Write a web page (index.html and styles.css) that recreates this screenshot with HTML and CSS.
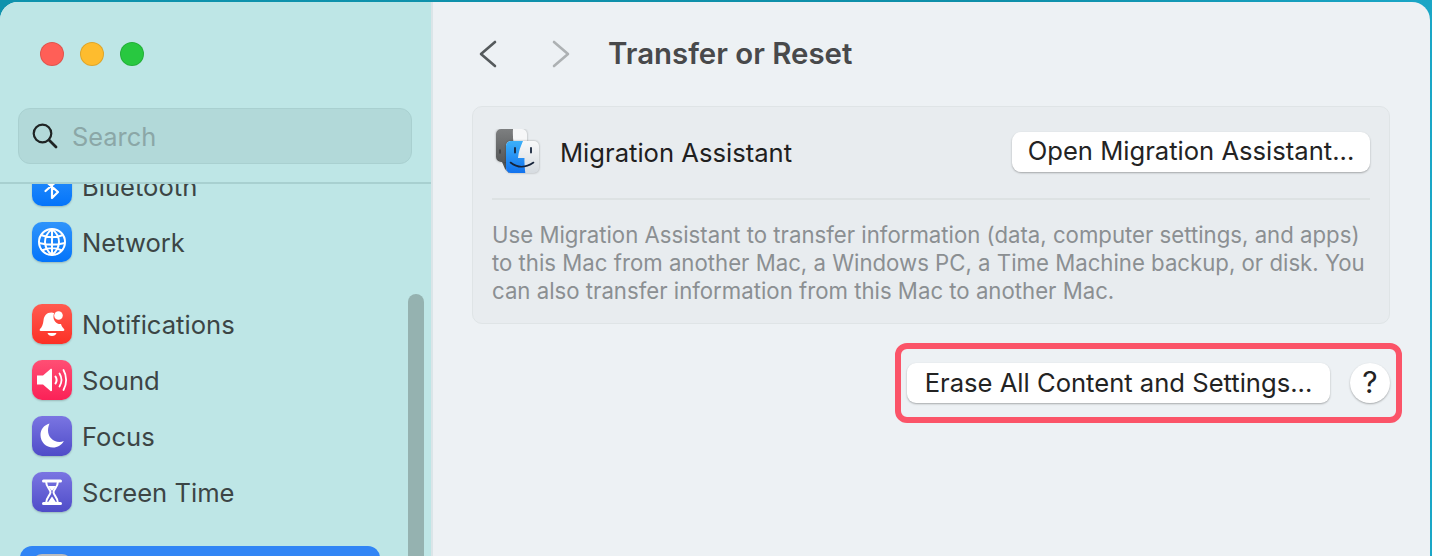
FILE: index.html
```html
<!DOCTYPE html>
<html>
<head>
  <title>Transfer or Reset</title>
  <link rel="stylesheet" href="styles.css">
</head>
<body>
  <div class="window">
    <div class="sidebar">
      <div class="sidebar-head">
        <div class="lights">
          <span class="light red"></span>
          <span class="light yellow"></span>
          <span class="light green"></span>
        </div>
        <div class="search">
          <svg class="search-icon" width="26" height="26" viewBox="0 0 26 26" fill="none" stroke="#1f2424" stroke-width="2.2" stroke-linecap="round"><circle cx="10.5" cy="10.5" r="8.8"/><path d="M17 17l7 7" stroke-width="2.8"/></svg>
          <span class="search-text">Search</span>
        </div>
      </div>
      <div class="list">
        <div class="list-inner">
          <div class="group">
            <div class="row">
              <span class="icon blue"><svg width="40" height="40" viewBox="0 0 40 40" fill="none" stroke="#fff" stroke-width="2.2" stroke-linejoin="round" stroke-linecap="round"><path d="M13.500 15l12.500 11-6 6V8l6 6-12.500 11"/></svg></span>
              <span class="label">Bluetooth</span>
            </div>
            <div class="row">
              <span class="icon blue"><svg width="40" height="40" viewBox="0 0 40 40" fill="none" stroke="#fff" stroke-width="2"><circle cx="20" cy="20" r="13"/><path d="M20 7c-5 4-7 8-7 13s2 9 7 13M20 7c5 4 7 8 7 13s-2 9-7 13M20 7v26M9 13c7 3 15 3 22 0M7 21c8 2 18 2 26 0M10 28.500c6-3 14-3 20 0"/></svg></span>
              <span class="label">Network</span>
            </div>
          </div>
          <div class="group">
            <div class="row">
              <span class="icon red-icon"><svg width="40" height="40" viewBox="0 0 40 40" fill="#fff"><path d="M19.500 8.500c-5 0-7.500 3.500-8 8-.5 4-1.500 6.500-3.500 8.500-.8.800-.4 2 .8 2h22.400c1.200 0 1.600-1.200.8-2-1.500-1.500-2.400-3-3-5-4 .5-8-3-7.500-8 0-1 .3-2 .7-2.800-.8-.5-1.700-.7-2.700-.7z"/><circle cx="26.500" cy="11.500" r="4.300"/><path d="M15.500 29h9c-.5 2-2.300 3-4.500 3s-4-1-4.500-3z"/></svg></span>
              <span class="label">Notifications</span>
            </div>
            <div class="row">
              <span class="icon pink"><svg width="40" height="40" viewBox="0 0 40 40" fill="none" stroke="#fff" stroke-linecap="round"><path d="M5 15.500h6l7.500-6.500c.6-.5 1.500-.1 1.500.7v20.600c0 .8-.9 1.200-1.500.7L11 24.500H5z" fill="#fff" stroke="none"/><path d="M23.500 16.500c1.400 2.200 1.400 4.800 0 7" stroke-width="2"/><path d="M27.500 13.500c2.500 4 2.500 9 0 13" stroke-width="1.800"/><path d="M31.500 10c3.500 6 3.500 14 0 20" stroke-width="1.800"/></svg></span>
              <span class="label">Sound</span>
            </div>
            <div class="row">
              <span class="icon purple"><svg width="40" height="40" viewBox="0 0 40 40" fill="#fff"><path d="M17.500 7.500C12 9 8.500 13.500 8.500 19c0 7 5.500 12.500 12.500 12.500 4.700 0 8.800-2.600 10.800-6.500-1.300.6-2.800.9-4.300.9-6.500 0-11.500-5-11.500-11.400 0-2.500.6-4.800 1.500-7z"/></svg></span>
              <span class="label">Focus</span>
            </div>
            <div class="row">
              <span class="icon purple"><svg width="40" height="40" viewBox="0 0 40 40" fill="none" stroke="#fff" stroke-width="2" stroke-linecap="round"><path d="M11.500 9h17M11.500 31.500h17" stroke-width="3"/><path d="M14 9c0 6.500 4.500 8 4.500 11.200S14 25 14 31.500M26 9c0 6.500-4.500 8-4.500 11.200S26 25 26 31.500"/><path d="M16 14h8l-4 5zM15.500 31l4.500-6.500 4.500 6.500z" fill="#fff" stroke="none"/></svg></span>
              <span class="label">Screen Time</span>
            </div>
          </div>
          <div class="group">
            <div class="row selected">
              <span class="icon grey"></span>
              <span class="label">General</span>
            </div>
          </div>
        </div>
        <div class="scrollbar"></div>
      </div>
    </div>

    <div class="main">
      <div class="toolbar">
        <svg class="nav-back" width="18" height="28" viewBox="0 0 18 28" fill="none" stroke="#555a5c" stroke-width="2.600" stroke-linecap="round" stroke-linejoin="round"><path d="M16 2L2 14l14 12"/></svg>
        <svg class="nav-forward" width="18" height="28" viewBox="0 0 18 28" fill="none" stroke="#adb1b3" stroke-width="2.600" stroke-linecap="round" stroke-linejoin="round"><path d="M2 2l14 12L2 26"/></svg>
        <h1 class="title">Transfer or Reset</h1>
      </div>

      <div class="card">
        <div class="card-top">
          <svg class="finder" width="48" height="48" viewBox="0 0 48 48">
            <defs>
              <linearGradient id="finderBlue" x1="0" y1="0" x2="0" y2="1"><stop offset="0" stop-color="#3cb0f9"/><stop offset="1" stop-color="#1272ee"/></linearGradient>
              <linearGradient id="finderWhite" x1="0" y1="0" x2="0" y2="1"><stop offset="0" stop-color="#f8f9fa"/><stop offset="1" stop-color="#d6dbe0"/></linearGradient>
              <linearGradient id="finderGrey" x1="0" y1="0" x2="0" y2="1"><stop offset="0" stop-color="#7d7f80"/><stop offset="1" stop-color="#565859"/></linearGradient>
            </defs>
            <path d="M8 33h6l2 3h4v4l-5 4-4-4z" fill="#54585b"/>
            <rect x="2" y="0" width="31" height="33" rx="5" fill="#f6f7f8" class="finder-back"/>
            <path d="M7 0h12c-.5 8 .5 15 2 22l2 11H7a5 5 0 0 1-5-5V5a5 5 0 0 1 5-5z" fill="url(#finderGrey)"/>
            <rect x="12" y="12" width="33" height="32" rx="5" fill="url(#finderWhite)" class="finder-front"/>
            <path d="M17 12h12c-2.500 5.500-4.500 11-5 17h6.500c-.2 5 .1 10 .8 15H17a5 5 0 0 1-5-5V17a5 5 0 0 1 5-5z" fill="url(#finderBlue)"/>
            <path d="M21 19v4.500M37 19v4.500" stroke="#16233a" stroke-width="1.800" stroke-linecap="round"/>
            <path d="M16.500 33.500c7 5.500 15 5.500 23 0" fill="none" stroke="#16233a" stroke-width="1.600" stroke-linecap="round"/>
            <path d="M6 21v3" stroke="#3b3d3f" stroke-width="1.500" stroke-linecap="round"/>
          </svg>
          <span class="card-name">Migration Assistant</span>
          <button class="btn open-btn" type="button">Open Migration Assistant...</button>
        </div>
        <p class="card-desc">Use Migration Assistant to transfer information (data, computer settings, and apps) to this Mac from another Mac, a Windows PC, a Time Machine backup, or disk. You can also transfer information from this Mac to another Mac.</p>
      </div>

      <div class="actions">
        <div class="highlight">
          <button class="btn erase-btn" type="button">Erase All Content and Settings...</button>
          <button class="btn help-btn" type="button">?</button>
        </div>
      </div>
    </div>
  </div>
</body>
</html>
```

FILE: styles.css
```css
html, body {
  height: 100%;
}
body {
  margin: 0;
  height: 556px;
  overflow: hidden;
  padding: 2px 2px 0 0;
  box-sizing: border-box;
  background: linear-gradient(90deg, #0f93ad 0%, #0e8fa9 70%, #1aa6c6 100%);
  font-family: Inter, "Liberation Sans", sans-serif;
}
.window {
  display: flex;
  height: 554px;
  border-radius: 18px 18px 0 0;
  overflow: hidden;
  background-color: #edf1f4;
}

/* sidebar */
.sidebar {
  width: 431px;
  flex-shrink: 0;
  display: flex;
  flex-direction: column;
  background-color: #bee6e6;
  border-right: 2px solid #dbe5e8;
}
.sidebar-head {
  height: 182px;
  flex-shrink: 0;
  box-sizing: border-box;
  padding: 40px 19px 0 18px;
  border-bottom: 2px solid #a8d0d0;
  position: relative;
  z-index: 1;
}
.lights {
  display: flex;
  gap: 16px;
  padding-left: 22px;
}
.light {
  width: 24px;
  height: 24px;
  box-sizing: border-box;
  border-radius: 50%;
  border: 1px solid rgba(0,0,0,0.12);
}
.light.red { background-color: #ff5f57; }
.light.yellow { background-color: #febc2e; }
.light.green { background-color: #28c840; }
.search {
  margin-top: 42px;
  height: 56px;
  box-sizing: border-box;
  display: flex;
  align-items: center;
  gap: 14px;
  padding: 0 13px;
  background-color: #b2d9d9;
  border: 1px solid #a9d0d0;
  border-radius: 12px;
}
.search-text {
  font-size: 25.4px;
  color: #8ba7a7;
}
.list {
  flex: 1;
  min-height: 0;
  position: relative;
  overflow: hidden;
}
.list-inner {
  margin-top: -26px;
  padding: 0 20px;
  display: flex;
  flex-direction: column;
  gap: 26px;
}
.row {
  width: 360px;
  height: 56px;
  box-sizing: border-box;
  display: flex;
  align-items: center;
  gap: 10px;
  padding-left: 12px;
  border-radius: 12px;
}
.row.selected {
  background-color: #3185f5;
}
.selected .label {
  color: #fff;
}
.label {
  font-size: 25.6px;
  color: #3c4545;
}
.icon {
  width: 40px;
  height: 40px;
  flex-shrink: 0;
  border-radius: 10px;
  box-shadow: 0 1px 2px rgba(0,0,0,0.2);
}
.icon svg {
  display: block;
}
.blue { background: linear-gradient(#2f94fb, #0474fa); }
.red-icon { background: linear-gradient(#ff5b50, #fc3025); }
.pink { background: linear-gradient(#ff4f74, #fb2157); }
.purple { background: linear-gradient(#7a75e2, #4f4cc8); }
.grey { background-color: #b9bcc0; }
.scrollbar {
  position: absolute;
  left: 408px;
  top: 110px;
  width: 16px;
  height: 320px;
  border-radius: 8px;
  background-color: #95b2b0;
}

/* main pane */
.main {
  flex: 1;
  padding: 0 40px 0 39px;
}
.toolbar {
  height: 104px;
  display: flex;
  align-items: center;
}
.nav-back {
  margin-left: 7px;
  margin-bottom: 1px;
}
.nav-forward {
  margin-left: 55px;
  margin-bottom: 1px;
}
.title {
  margin: 0 0 2px 38px;
  font-size: 29.4px;
  font-weight: 600;
  color: #48494b;
}
.card {
  height: 218px;
  box-sizing: border-box;
  padding: 0 19px;
  background-color: #e8ecef;
  border: 1px solid #dfe4e6;
  border-radius: 10px;
}
.card-top {
  height: 91px;
  display: flex;
  align-items: center;
  border-bottom: 2px solid #dde2e3;
}
.finder {
  margin-left: 2px;
}
.finder-back, .finder-front {
  filter: drop-shadow(0 0 1px rgba(0,0,0,0.3));
}
.card-name {
  margin-left: 18px;
  flex: 1;
  font-size: 25.6px;
  color: #1f2020;
}
.btn {
  height: 40px;
  padding: 0 0 2px;
  border: none;
  background-color: #fff;
  border-radius: 9px;
  box-shadow: 0 1px 2px rgba(0,0,0,0.3);
  font-family: inherit;
  font-size: 25.6px;
  color: #232323;
}
.open-btn {
  width: 358px;
  padding-bottom: 4px;
  margin-bottom: 1px;
}
.card-desc {
  margin: 21px 0 0;
  font-size: 22.2px;
  line-height: 28px;
  color: #8b8f92;
}
.actions {
  display: flex;
  justify-content: flex-end;
  margin: 19px -12px 0 0;
}
.highlight {
  display: flex;
  align-items: center;
  gap: 20px;
  height: 80px;
  box-sizing: border-box;
  padding: 0 6px;
  border: 6px solid #fb5468;
  border-radius: 12px;
}
.erase-btn {
  width: 423px;
}
.help-btn {
  width: 40px;
  border-radius: 50%;
  font-size: 30px;
  font-weight: 400;
}
```
